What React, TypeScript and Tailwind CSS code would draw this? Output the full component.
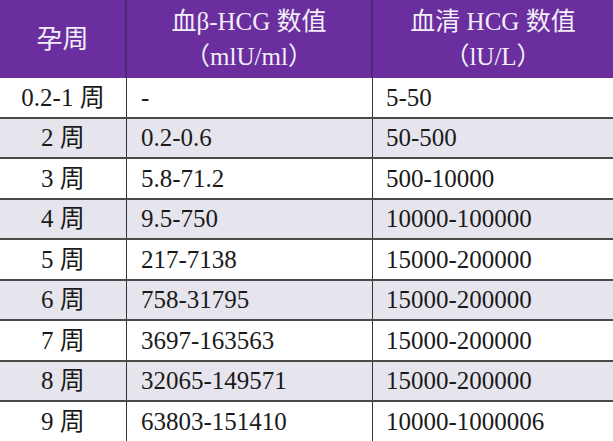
const rows: [string, string, string][] = [
  ['0.2-1 周', '-', '5-50'],
  ['2 周', '0.2-0.6', '50-500'],
  ['3 周', '5.8-71.2', '500-10000'],
  ['4 周', '9.5-750', '10000-100000'],
  ['5 周', '217-7138', '15000-200000'],
  ['6 周', '758-31795', '15000-200000'],
  ['7 周', '3697-163563', '15000-200000'],
  ['8 周', '32065-149571', '15000-200000'],
  ['9 周', '63803-151410', '10000-1000006'],
]

export default function App() {
  return (
    <div className="h-[441px] w-[613px] overflow-hidden bg-white font-['Liberation_Serif','Noto_Sans_CJK_SC',serif] text-[#1a1a1a]">
      <div className="grid h-[78px] grid-cols-[127px_246px_1fr] bg-[#6a2e9f] text-[#f3eef8]">
        <div className="flex items-center justify-center border-r-2 border-[#4c2a74] text-[26px]">孕周</div>
        <div className="flex flex-col items-center justify-center border-r-2 border-[#4c2a74] text-[25px] leading-[35px]">
          <span>血β-HCG 数值</span>
          <span>（mlU/ml）</span>
        </div>
        <div className="flex flex-col items-center justify-center text-[25px] leading-[35px]">
          <span>血清 HCG 数值</span>
          <span>（lU/L）</span>
        </div>
      </div>
      {rows.map(([week, a, b], i) => (
        <div
          key={week}
          className={`grid h-[40.5px] grid-cols-[127px_246px_1fr] border-b-2 border-[#4a4a4a] text-[25px] ${
            i % 2 === 1 ? 'bg-[#e6e5ee]' : 'bg-white'
          }`}
        >
          <div className="flex items-center justify-center border-r-[1.5px] border-[#333]">{week}</div>
          <div className="flex items-center border-r-[1.5px] border-[#333] pl-[14px]">{a}</div>
          <div className="flex items-center pl-[13px]">{b}</div>
        </div>
      ))}
    </div>
  )
}
